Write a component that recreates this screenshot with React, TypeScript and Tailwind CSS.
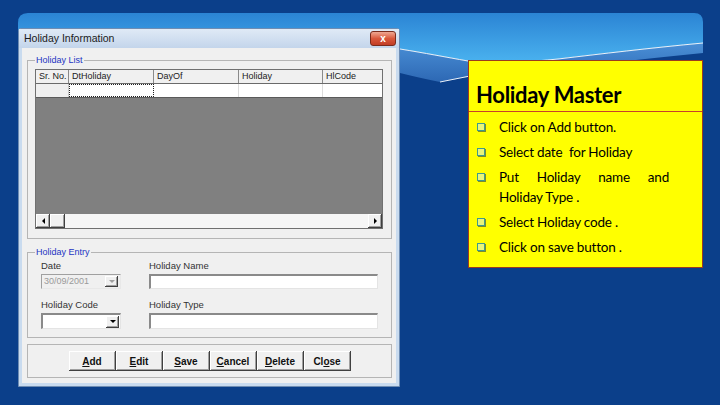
import React from "react";

const raised =
  "bg-[#f0f0f0] shadow-[inset_-1px_-1px_0_#404040,inset_1px_1px_0_#ffffff,inset_-2px_-2px_0_#a0a0a0]";

function Arrow({ dir, color }: { dir: "left" | "right" | "down"; color: string }) {
  const pts =
    dir === "left" ? "4,0 4,6 1,3" : dir === "right" ? "1,0 1,6 4,3" : "0,1 6,1 3,4";
  return (
    <svg width={dir === "down" ? 6 : 5} height={dir === "down" ? 5 : 6} viewBox={dir === "down" ? "0 0 6 5" : "0 0 5 6"}>
      <polygon points={pts} fill={color} />
    </svg>
  );
}

function UBtn({ pre, u, post }: { pre: string; u: string; post: string }) {
  return (
    <button
      className={`h-[20px] w-[47px] flex items-center justify-center text-[10px] font-bold text-[#111] ${raised}`}
    >
      <span>
        {pre}
        <span className="underline">{u}</span>
        {post}
      </span>
    </button>
  );
}

function Bullet({ children }: { children: React.ReactNode }) {
  return (
    <div className="flex gap-[14px] mb-[5px]">
      <div className="mt-[6px] w-[8px] h-[8px] shrink-0 border-[1.5px] border-[#3f9a8c] bg-[#e8f57a] shadow-[1px_1px_0_#7a8a30]" />
      <div className="w-[170px] text-justify text-[13.5px] leading-[20px] tracking-[-0.2px] text-black">{children}</div>
    </div>
  );
}

export default function App() {
  return (
    <div className="relative w-[720px] h-[405px] overflow-hidden bg-[#0b3f8a] font-['Liberation_Sans',Arial,sans-serif]">
      <svg className="absolute inset-0" width="720" height="405" viewBox="0 0 720 405">
        <defs>
          <linearGradient id="sky" x1="0" y1="0" x2="0" y2="1">
            <stop offset="0" stopColor="#2b84d4" />
            <stop offset="1" stopColor="#4ab2ef" />
          </linearGradient>
          <linearGradient id="band" x1="0" y1="0" x2="0" y2="1">
            <stop offset="0" stopColor="#4a8fd6" />
            <stop offset="1" stopColor="#2d68b4" />
          </linearGradient>
        </defs>
        <path
          d="M18,23 Q18,13 28,13 H694 Q703,13 703,22 V43 C650,48 600,54 558,59 C530,62 500,63 468,61 C445,57 425,53 400,49 H18 Z"
          fill="url(#sky)"
        />
        <path
          d="M400,49 C425,53 445,57 468,61 C500,63 530,62 558,59 C600,54 650,48 703,43 V53 C650,58 600,64 560,69 C520,73 490,75 468,77 C455,79 447,81 440,82 C425,79 412,76 400,73 Z"
          fill="url(#band)"
        />
        <path
          d="M400,49 C425,53 445,57 468,61 C500,63 530,62 558,59 C600,54 650,48 703,43"
          stroke="#ffffff"
          strokeWidth="1"
          fill="none"
          opacity="0.9"
        />
        <path d="M440,82 C450,80 460,78 470,76" stroke="#ffffff" strokeWidth="1" fill="none" opacity="0.9" />
      </svg>

      <div className="relative flex items-start pl-[18px] pt-[28px]">
        {/* Dialog */}
        <div className="w-[382px] h-[359px] flex flex-col border border-[#6f8db3] bg-[#c9dbef] rounded-t-[3px]">
          <div className="h-[19px] flex items-center justify-between pl-[5px] pr-[3px] bg-gradient-to-b from-[#e0eaf6] to-[#c3d5eb]">
            <span className="text-[10.5px] text-[#1b1b1b]">Holiday Information</span>
            <div className="w-[26px] h-[15px] rounded-[3px] border border-[#7a2b1c] bg-gradient-to-b from-[#eea792] via-[#d9583c] to-[#c23c24] flex items-center justify-center text-white text-[10px] font-bold leading-none">
              x
            </div>
          </div>
          <div className="flex-1 mx-[3px] mb-[3px] bg-[#f0f0f0] pl-[5px] pr-[4px] flex flex-col">
            {/* Holiday List */}
            <fieldset className="mt-[6px] h-[185px] border border-[#b5b5b5]">
              <legend className="ml-[7px] px-[1px] text-[9px] leading-[12px] text-[#1c34c2]">Holiday List</legend>
              <div className="mt-[3px] ml-[7px] w-[348px] h-[160px] border border-[#707070] flex flex-col text-[9px] text-[#222]">
                <div className="h-[14px] flex bg-[#f0f0f0] border-b border-[#6a6a6a]">
                  <div className="w-[33px] pl-[3px] border-r border-[#8a8a8a] leading-[13px]">Sr. No.</div>
                  <div className="w-[85px] pl-[3px] border-r border-[#8a8a8a] leading-[13px]">DtHoliday</div>
                  <div className="w-[85px] pl-[3px] border-r border-[#8a8a8a] leading-[13px]">DayOf</div>
                  <div className="w-[84px] pl-[3px] border-r border-[#8a8a8a] leading-[13px]">Holiday</div>
                  <div className="flex-1 pl-[3px] leading-[13px]">HlCode</div>
                </div>
                <div className="h-[13px] flex bg-white">
                  <div className="w-[33px] bg-[#efefef] border-r border-[#c8c8c8]" />
                  <div className="w-[85px] border border-dotted border-[#202020]" />
                  <div className="w-[85px] border-r border-[#dcdcdc]" />
                  <div className="w-[84px] border-r border-[#dcdcdc]" />
                  <div className="flex-1" />
                </div>
                <div className="flex-1 bg-[#808080] border-t border-[#5a5a5a]" />
                <div className="h-[14px] flex bg-[#f6f6f6]">
                  <div className={`w-[14px] h-[14px] flex items-center justify-center ${raised}`}>
                    <Arrow dir="left" color="#000" />
                  </div>
                  <div className={`w-[15px] h-[14px] ${raised}`} />
                  <div className="flex-1" />
                  <div className={`w-[14px] h-[14px] flex items-center justify-center ${raised}`}>
                    <Arrow dir="right" color="#000" />
                  </div>
                </div>
              </div>
            </fieldset>

            {/* Holiday Entry */}
            <fieldset className="mt-[7px] h-[92px] border border-[#b5b5b5]">
              <legend className="ml-[7px] px-[1px] text-[9px] leading-[12px] text-[#1c34c2]">Holiday Entry</legend>
              <div className="pl-[13px] pt-[2px] text-[9.5px] text-[#333]">
                <div className="flex gap-[28px]">
                  <div className="w-[80px]">
                    <div className="h-[12px] leading-[12px]">Date</div>
                    <div className="mt-[2px] h-[15px] flex items-center border border-t-[#a0a0a0] border-l-[#a0a0a0] border-b-[#e8e8e8] border-r-[#e8e8e8] bg-[#f0f0f0] pl-[2px] pr-[2px]">
                      <span className="flex-1 text-[#9a9a9a] text-[9px]">30/09/2001</span>
                      <div className={`w-[13px] h-[11px] flex items-center justify-center ${raised}`}>
                        <Arrow dir="down" color="#a0a0a0" />
                      </div>
                    </div>
                  </div>
                  <div className="w-[229px]">
                    <div className="h-[12px] leading-[12px]">Holiday Name</div>
                    <div className="mt-[2px] h-[15px] bg-white border-t-2 border-l-2 border-[#8a8a8a] border-b border-r border-b-[#e4e4e4] border-r-[#e4e4e4]" />
                  </div>
                </div>
                <div className="flex gap-[28px] mt-[10px]">
                  <div className="w-[80px]">
                    <div className="h-[12px] leading-[12px]">Holiday Code</div>
                    <div className="mt-[2px] h-[16px] flex items-center justify-end bg-white border-t-2 border-l-2 border-[#8a8a8a] border-b border-r border-b-[#e4e4e4] border-r-[#e4e4e4] pr-[1px]">
                      <div className={`w-[13px] h-[12px] flex items-center justify-center ${raised}`}>
                        <Arrow dir="down" color="#000" />
                      </div>
                    </div>
                  </div>
                  <div className="w-[229px]">
                    <div className="h-[12px] leading-[12px]">Holiday Type</div>
                    <div className="mt-[2px] h-[16px] bg-white border-t-2 border-l-2 border-[#8a8a8a] border-b border-r border-b-[#e4e4e4] border-r-[#e4e4e4]" />
                  </div>
                </div>
              </div>
            </fieldset>

            {/* Buttons */}
            <div className="mt-[6px] h-[34px] border border-[#b5b5b5] flex items-center justify-center">
              <UBtn pre="" u="A" post="dd" />
              <UBtn pre="" u="E" post="dit" />
              <UBtn pre="" u="S" post="ave" />
              <UBtn pre="" u="C" post="ancel" />
              <UBtn pre="" u="D" post="elete" />
              <UBtn pre="Cl" u="o" post="se" />
            </div>
          </div>
        </div>

        {/* Yellow note */}
        <div className="ml-[68px] mt-[32px] w-[235px] h-[208px] bg-[#ffff00] border border-[#9b3b1e] font-['Lato','Open_Sans',sans-serif]">
          <div className="h-[51px] flex items-end pl-[7px] pb-[5px] border-b border-[#c8402a]">
            <span className="text-[22px] font-bold leading-none tracking-[-0.3px] text-black">Holiday Master</span>
          </div>
          <div className="pt-[5px] pl-[8px]">
            <Bullet>Click on Add button.</Bullet>
            <Bullet>Select date&nbsp; for Holiday</Bullet>
            <Bullet>Put Holiday name and Holiday Type .</Bullet>
            <Bullet>Select Holiday code .</Bullet>
            <Bullet>Click on save button .</Bullet>
          </div>
        </div>
      </div>
    </div>
  );
}
